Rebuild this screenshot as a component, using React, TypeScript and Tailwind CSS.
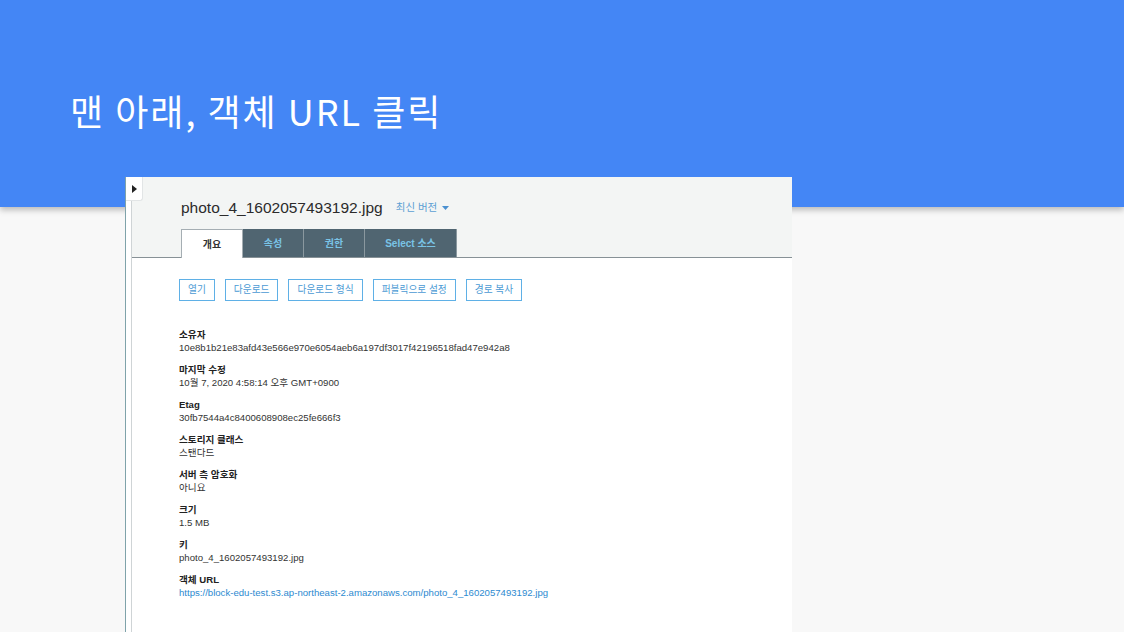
const tabs = [
  { name: "개요", active: true, width: "w-[62px]" },
  { name: "속성", active: false, width: "w-[61px]" },
  { name: "권한", active: false, width: "w-[61px]" },
  { name: "Select 소스", active: false, width: "w-[92px]" },
];

const actions = ["열기", "다운로드", "다운로드 형식", "퍼블릭으로 설정", "경로 복사"];

const details = [
  { label: "소유자", value: "10e8b1b21e83afd43e566e970e6054aeb6a197df3017f42196518fad47e942a8" },
  { label: "마지막 수정", value: "10월 7, 2020 4:58:14 오후 GMT+0900" },
  { label: "Etag", value: "30fb7544a4c8400608908ec25fe666f3" },
  { label: "스토리지 클래스", value: "스탠다드" },
  { label: "서버 측 암호화", value: "아니요" },
  { label: "크기", value: "1.5 MB" },
  { label: "키", value: "photo_4_1602057493192.jpg" },
  {
    label: "객체 URL",
    value: "https://block-edu-test.s3.ap-northeast-2.amazonaws.com/photo_4_1602057493192.jpg",
    link: true,
  },
];

const App = () => {
  return (
    <div className="w-[1124px] h-[632px] overflow-hidden bg-[#f8f8f8]">
      {/* Slide title bar */}
      <div className="h-[207px] bg-[#4486f5] shadow-[0_3px_6px_rgba(0,0,0,0.25)] pl-[70px] pt-[86px]">
        <h1 className="text-[36px] leading-[48px] font-normal text-white font-['Noto_Sans_CJK_KR',sans-serif] tracking-[2px]">
          맨 아래, 객체 URL 클릭
        </h1>
      </div>

      {/* S3 console screenshot */}
      <div className="relative z-10 -mt-[30px] ml-[125px] w-[667px] h-[460px] flex bg-white border-l border-[#7fa3aa] font-['Liberation_Sans','Noto_Sans_CJK_KR',sans-serif]">
        {/* Collapsed side nav */}
        <div className="w-[6px] border-r border-[#cfd4d6] bg-white"></div>
        <div className="absolute left-0 top-0 w-[17px] h-[24px] bg-white rounded-br-[3px] border-r border-b border-[#e2e5e6] flex items-center justify-center">
          <svg width="5" height="8" viewBox="0 0 5 8">
            <path d="M0 0 L5 4 L0 8 Z" fill="#222" />
          </svg>
        </div>

        <div className="flex-1 flex flex-col">
          {/* Object header */}
          <div className="h-[81px] bg-[#f3f5f4] border-b border-[#879196] pl-[49px] flex flex-col justify-end">
            <div className="flex items-center gap-[13px] mb-[11px]">
              <span className="text-[15.5px] leading-[20px] text-[#2b2b2b]">photo_4_1602057493192.jpg</span>
              <span className="flex items-center gap-[5px] text-[10.5px] text-[#5b9fd3]">
                최신 버전
                <svg width="7" height="4" viewBox="0 0 7 4">
                  <path d="M0 0 L7 0 L3.5 4 Z" fill="#4a90d0" />
                </svg>
              </span>
            </div>
            <div className="flex -mb-px">
              {tabs.map(tab => (
                <div
                  key={tab.name}
                  className={
                    tab.active
                      ? `${tab.width} h-[29px] flex items-center justify-center bg-white border border-b-0 border-[#a5aeb3] text-[10px] font-bold text-[#333]`
                      : `${tab.width} h-[28px] flex items-center justify-center bg-[#506571] border-r border-[#8a989f] text-[10px] font-bold text-[#79c3e6]`
                  }
                >
                  {tab.name}
                </div>
              ))}
            </div>
          </div>

          {/* Overview */}
          <div className="pl-[47px] pt-[21px]">
            <div className="flex gap-[10px]">
              {actions.map(action => (
                <button
                  key={action}
                  className="h-[22px] px-[8px] border border-[#5fb0e6] bg-white text-[9.7px] text-[#4b9ad4]"
                >
                  {action}
                </button>
              ))}
            </div>

            <div className="mt-[27px] flex flex-col gap-[9px]">
              {details.map(item => (
                <div key={item.label} className="text-[9.6px] leading-[13px]">
                  <div className="font-bold text-[#222]">{item.label}</div>
                  <div className={item.link ? "text-[#2d8ad0]" : "text-[#333]"}>{item.value}</div>
                </div>
              ))}
            </div>
          </div>
        </div>
      </div>
    </div>
  );
};

export default App;
